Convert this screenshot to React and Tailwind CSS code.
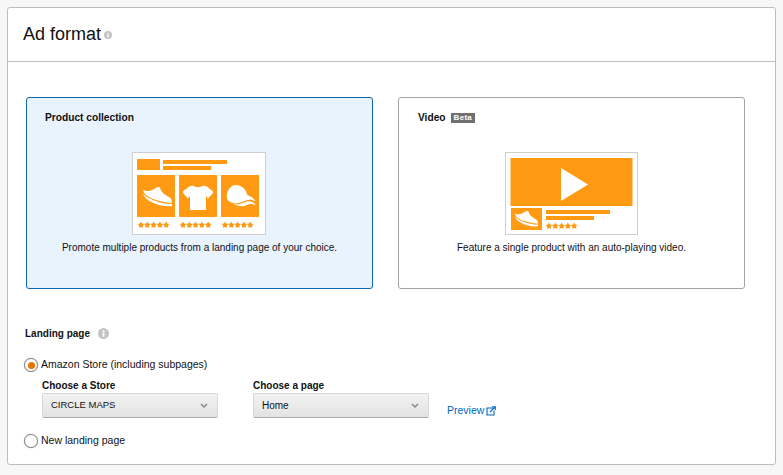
const O = "#ff9a12";

function Star({ x, y, s = 3.5 }) {
  const pts = [];
  for (let i = 0; i < 10; i++) {
    const r = i % 2 ? s * 0.55 : s;
    const a = -Math.PI / 2 + (i * Math.PI) / 5;
    pts.push(`${(x + r * Math.cos(a)).toFixed(2)},${(y + r * Math.sin(a)).toFixed(2)}`);
  }
  return <polygon points={pts.join(" ")} fill={O} />;
}

function Stars({ x, y }) {
  return (
    <>
      {[0, 1, 2, 3, 4].map((i) => (
        <Star key={i} x={x + i * 6.3} y={y} />
      ))}
    </>
  );
}

function Shoe({ x, y, k = 1 }) {
  return (
    <g transform={`translate(${x} ${y}) scale(${k})`} fill="#fff">
      <path d="M0.5 3 C4 5 8 4 10.5 2.5 L15 0 L17.5 0.5 C18 3 19 4.5 21 6.5 C24 9 27.5 10 29 12.5 L29.3 16 C22 15.5 16 14 11 12 C7 10.5 2 8.5 0.5 3 Z" />
      <path d="M0.5 6.5 C3 10 7 11.5 10.5 13 C16 15.5 23 17 29.5 17 L29.5 19 C22 20 15 18 10 15.5 C6 13.5 2 11.5 0.5 6.5 Z" />
    </g>
  );
}

function Shirt({ x, y }) {
  return (
    <g transform={`translate(${x} ${y})`} fill="#fff">
      <path d="M10 0 C12 2.2 18 2.2 20 0 L24 1 L30 6 L30 7.5 L25 13 L23 10.5 L23 24.5 L7 24.5 L7 10.5 L5 13 L0 7.5 L0 6 L6 1 Z" />
    </g>
  );
}

function Cap({ x, y }) {
  return (
    <g transform={`translate(${x} ${y})`} fill="#fff">
      <path d="M6 0.5 L10 0 C16 1 19.5 4.5 20.5 10 C24 11 27 13 29 16.5 C25.5 14.5 22 14.5 19 15.5 C14 17 9 20 5 17.5 C2 16.5 0 15 0 12 C0 7 2 3 6 0.5 Z" />
      <path d="M6.5 19 C11 20.5 15 18 20 16.5 C24 15.8 27 17 29 20 C25 18.5 22 18.5 20 20 C17 22 12 21.5 6.5 19 Z" />
    </g>
  );
}

function CollectionArt() {
  return (
    <svg width="134" height="83" viewBox="0 0 134 83" className="block mr-[1px]">
      <rect x="0.5" y="0.5" width="133" height="82" fill="#fff" stroke="#cfcfcf" />
      <rect x="5" y="7" width="23" height="11" fill={O} />
      <rect x="31" y="8" width="64" height="4" fill={O} />
      <rect x="31" y="14" width="48" height="4" fill={O} />
      <rect x="5" y="23" width="38" height="42" fill={O} />
      <rect x="47" y="23" width="38" height="42" fill={O} />
      <rect x="89" y="23" width="38" height="42" fill={O} />
      <Shoe x={10.5} y={35} />
      <Shirt x={51} y={33.5} />
      <Cap x={94.7} y={33} />
      <Stars x={9} y={73} />
      <Stars x={51} y={73} />
      <Stars x={93} y={73} />
    </svg>
  );
}

function VideoArt() {
  return (
    <svg width="133" height="83" viewBox="0 0 133 83" className="block">
      <rect x="0.5" y="0.5" width="132" height="82" fill="#fff" stroke="#cfcfcf" />
      <rect x="5.5" y="6" width="122" height="48" fill={O} />
      <polygon points="56,16 83,32.5 56,49" fill="#fff" />
      <rect x="6" y="56" width="31" height="22" fill={O} />
      <Shoe x={9.5} y={59} k={0.8} />
      <rect x="41" y="58" width="64" height="4" fill={O} />
      <rect x="41" y="64" width="48" height="4" fill={O} />
      <Stars x={44} y={74} />
    </svg>
  );
}

function Info({ size = 9 }) {
  return (
    <svg width={size} height={size} viewBox="0 0 12 12" className="block">
      <circle cx="6" cy="6" r="6" fill="#c4c4c4" />
      <rect x="5" y="5" width="2" height="4.5" fill="#fff" />
      <rect x="5" y="2.5" width="2" height="1.7" fill="#fff" />
    </svg>
  );
}

function Chevron() {
  return (
    <svg width="8" height="6" viewBox="0 0 8 6" className="block">
      <path d="M1 1 L4 4 L7 1" fill="none" stroke="#888" strokeWidth="1.5" />
    </svg>
  );
}

function Select({ label, value, valueClass }) {
  return (
    <div className="flex flex-col w-[176px]">
      <div className="h-[15px] leading-[15px] text-[10px] font-bold text-[#111]">{label}</div>
      <div className="h-[25px] flex items-center justify-between pl-[8px] pr-[9px] rounded-[2px] border border-[#d8d8d8] border-b-[#aaa] bg-gradient-to-b from-[#f2f2f2] to-[#e3e3e3] text-[#111]">
        <span className={valueClass}>{value}</span>
        <Chevron />
      </div>
    </div>
  );
}

function Card({ active, title, badge, art, text }) {
  return (
    <div
      className={
        "w-[347px] h-[192px] rounded-[3px] border flex flex-col " +
        (active ? "bg-[#e8f3fe] border-[#0f67ac]" : "bg-white border-[#a3a3a3]")
      }
    >
      <div className={"mt-[12px] flex items-center gap-[5px] h-[16px] text-[10.2px] font-bold text-[#111] " + (active ? "ml-[18px]" : "ml-[19px]")}>
        {title}
        {badge && (
          <span className="bg-[#707070] text-white text-[8px] font-bold leading-[10px] h-[10px] px-[3px] tracking-[0.3px]">
            {badge}
          </span>
        )}
      </div>
      <div className="mt-[26px] flex justify-center">{art}</div>
      <div className="mt-[6px] text-center text-[10px] leading-[14px] text-[#111]">{text}</div>
    </div>
  );
}

function Radio({ checked }) {
  return (
    <span className="w-[14px] h-[14px] rounded-full border border-[#888] bg-white flex items-center justify-center shrink-0 shadow-[0_0_1px_#999]">
      {checked && <span className="w-[7px] h-[7px] rounded-full bg-[#e77600]" />}
    </span>
  );
}

export default function App() {
  return (
    <div
      className="w-[783px] h-[475px] bg-[#f7f7f7] pt-[7px] pl-[7px] overflow-hidden"
      style={{ fontFamily: '"Liberation Sans", Arial, sans-serif' }}
    >
      <div className="w-[769px] h-[458px] bg-white border border-[#bdbdbd] rounded-[3px]">
        <div className="h-[54px] border-b border-[#bdbdbd] pl-[15px] pb-[2px] flex items-center gap-[3px]">
          <span className="text-[18px] text-[#111] leading-[24px]">Ad format</span>
          <span className="mt-[3px]">
            <Info size={8} />
          </span>
        </div>
        <div className="pt-[35px] pl-[18px]">
          <div className="flex gap-[25px]">
            <Card
              active
              title="Product collection"
              art={<CollectionArt />}
              text="Promote multiple products from a landing page of your choice."
            />
            <Card
              title="Video"
              badge="Beta"
              art={<VideoArt />}
              text="Feature a single product with an auto-playing video."
            />
          </div>
          <div className="mt-[36px] -ml-[1px] flex items-center gap-[8px] h-[16px] text-[10px] font-bold text-[#111]">
            Landing page
            <Info size={11} />
          </div>
          <div className="mt-[16px] -ml-[2px] flex items-center gap-[3px] h-[16px] text-[10.5px] text-[#111]">
            <Radio checked />
            Amazon Store (including subpages)
          </div>
          <div className="mt-[5px] ml-[16px] flex items-end">
            <Select label="Choose a Store" value="CIRCLE MAPS" valueClass="text-[9.5px]" />
            <div className="w-[35px]" />
            <Select label="Choose a page" value="Home" valueClass="text-[10px]" />
            <div className="ml-[18px] -mb-[3px] flex items-center gap-[2px] text-[10.5px] text-[#0066c0] h-[20px]">
              Preview
              <svg width="10" height="10" viewBox="0 0 10 10" className="block">
                <path d="M7 2 H1 V9 H8 V4.5" fill="none" stroke="#0066c0" strokeWidth="1.1" />
                <path d="M4 6 L9 1 M6 0.7 H9.3 V4" fill="none" stroke="#0066c0" strokeWidth="1.1" />
              </svg>
            </div>
          </div>
          <div className="mt-[15px] -ml-[2px] flex items-center gap-[3px] h-[16px] text-[10.5px] text-[#111]">
            <Radio />
            New landing page
          </div>
        </div>
      </div>
    </div>
  );
}
